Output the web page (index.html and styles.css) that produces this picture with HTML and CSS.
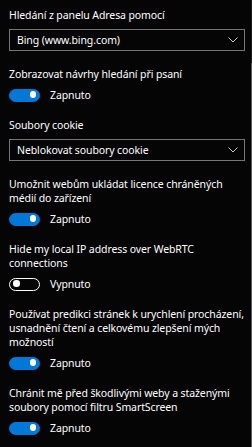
FILE: index.html
```html
<!DOCTYPE html>
<html lang="cs">
<head>
    <meta charset="UTF-8">
    <meta name="viewport" content="width=device-width, initial-scale=1.0">
    <title>Upřesnit nastavení</title>
    <link rel="stylesheet" href="styles.css">
</head>
<body>
    <div class="panel">
        <div class="setting">
            <div class="label">Hledání z panelu Adresa pomocí</div>
            <div class="select">
                <span>Bing (www.bing.com)</span>
                <svg class="chevron" width="10" height="6" viewBox="0 0 10 6"><polyline points="0.5,0.5 5,5 9.5,0.5" /></svg>
            </div>
        </div>

        <div class="setting">
            <div class="label">Zobrazovat návrhy hledání při psaní</div>
            <div class="switch-row"><span class="switch on"></span><span>Zapnuto</span></div>
        </div>

        <div class="setting">
            <div class="label">Soubory cookie</div>
            <div class="select">
                <span>Neblokovat soubory cookie</span>
                <svg class="chevron" width="10" height="6" viewBox="0 0 10 6"><polyline points="0.5,0.5 5,5 9.5,0.5" /></svg>
            </div>
        </div>

        <div class="setting">
            <div class="label">Umožnit webům ukládat licence chráněných médií do zařízení</div>
            <div class="switch-row"><span class="switch on"></span><span>Zapnuto</span></div>
        </div>

        <div class="setting">
            <div class="label">Hide my local IP address over WebRTC connections</div>
            <div class="switch-row"><span class="switch"></span><span>Vypnuto</span></div>
        </div>

        <div class="setting">
            <div class="label">Používat predikci stránek k urychlení procházení, usnadnění čtení a celkovému zlepšení mých možností</div>
            <div class="switch-row"><span class="switch on"></span><span>Zapnuto</span></div>
        </div>

        <div class="setting">
            <div class="label">Chránit mě před škodlivými weby a staženými soubory pomocí filtru SmartScreen</div>
            <div class="switch-row"><span class="switch on"></span><span>Zapnuto</span></div>
        </div>
    </div>

    <div class="scrollbar"><div class="thumb"></div></div>
</body>
</html>
```

FILE: styles.css
```css
body {
    margin: 0;
    padding: 0;
    background: #050505;
    color: #ffffff;
    font-family: 'Noto Sans', 'Open Sans', sans-serif;
    font-size: 10.5px;
    line-height: 14px;
    letter-spacing: -0.1px;
    overflow: hidden;
}

.panel {
    padding: 8px 7px 0 9px;
}

.setting {
    margin-bottom: 16px;
}

.label {
    margin-bottom: 7px;
    margin-right: -2px;
}

.select {
    display: flex;
    align-items: center;
    justify-content: space-between;
    height: 20px;
    padding: 0 6px 0 7px;
    border: 1px solid #767676;
}

.chevron {
    fill: none;
    stroke: #c8c8c8;
    stroke-width: 1;
}

.switch-row {
    display: flex;
    align-items: center;
    gap: 10px;
    height: 14px;
}

.switch {
    position: relative;
    box-sizing: border-box;
    width: 31px;
    height: 13px;
    border: 1.5px solid #ffffff;
    border-radius: 7px;
}

.switch::after {
    content: '';
    position: absolute;
    top: 1.75px;
    left: 3px;
    width: 6.5px;
    height: 6.5px;
    border-radius: 50%;
    background: #ffffff;
}

.switch.on {
    background: #0078d7;
    border-color: #0078d7;
}

.switch.on::after {
    left: auto;
    right: 3px;
}

.scrollbar {
    position: absolute;
    top: 0;
    right: 0;
    bottom: 0;
    width: 1px;
    background: #1a1a1a;
}

.thumb {
    margin-top: 63px;
    height: 384px;
    background: #5e5e5e;
}
```
